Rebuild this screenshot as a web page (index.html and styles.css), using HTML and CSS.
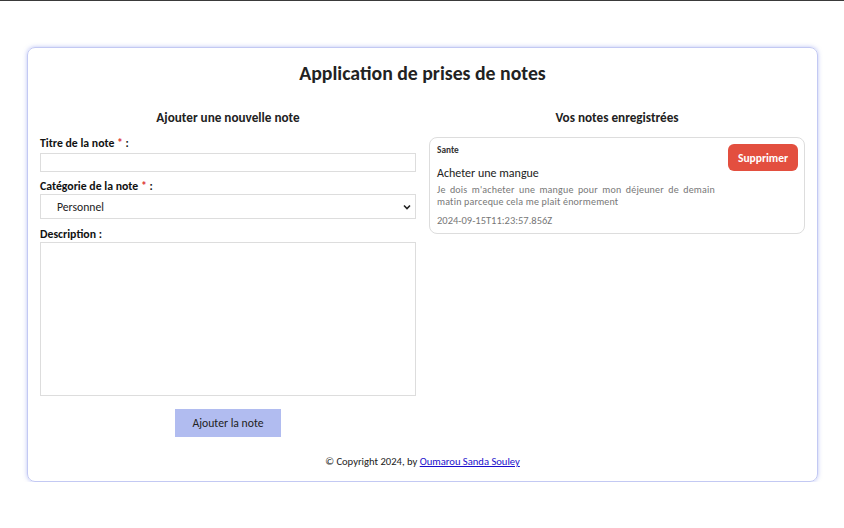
FILE: index.html
```html
<!DOCTYPE html>
<html lang="fr">
<head>
<meta charset="utf-8">
<title>Application de prises de notes</title>
<link rel="stylesheet" href="styles.css">
</head>
<body>
<div class="topline"></div>
<main class="app">
  <h1 class="app-title">Application de prises de notes</h1>
  <div class="columns">
    <section class="col">
      <h2 class="col-title">Ajouter une nouvelle note</h2>
      <form class="form">
        <label class="label" for="titre">Titre de la note <span class="req">*</span> :</label>
        <input class="input" id="titre" type="text">
        <label class="label" for="cat">Catégorie de la note <span class="req">*</span> :</label>
        <select class="select" id="cat">
          <option>Personnel</option>
        </select>
        <label class="label" for="desc">Description :</label>
        <textarea class="textarea" id="desc"></textarea>
        <div class="actions"><button type="button" class="btn-add">Ajouter la note</button></div>
      </form>
    </section>
    <section class="col">
      <h2 class="col-title">Vos notes enregistrées</h2>
      <article class="note">
        <div class="note-body">
          <div class="note-cat">Sante</div>
          <div class="note-title">Acheter une mangue</div>
          <p class="note-desc">Je dois m'acheter une mangue pour mon déjeuner de demain matin parceque cela me plait énormement</p>
          <div class="note-date">2024-09-15T11:23:57.856Z</div>
        </div>
        <button type="button" class="btn-del">Supprimer</button>
      </article>
    </section>
  </div>
  <footer class="footer">© Copyright 2024, by <a href="#">Oumarou Sanda Souley</a></footer>
</main>
</body>
</html>
```
FILE: styles.css
```css
* { box-sizing: border-box; }
html, body { margin: 0; padding: 0; background: #fff; }
body {
  font-family: "Carlito", "Lato", "Open Sans", sans-serif;
  color: #222;
}
.topline { height: 1px; background: #3a3a3a; }
.app {
  width: 791px;
  margin: 46px 0 0 27px;
  border: 1px solid #c3c9f3;
  border-radius: 8px;
  box-shadow: 0 0 4px rgba(120, 135, 235, 0.5);
  padding: 13px 12px 12px;
}
.app-title {
  margin: 0;
  text-align: center;
  font-size: 19.8px;
  font-weight: 700;
  line-height: 24px;
  color: #222;
}
.columns {
  display: grid;
  grid-template-columns: 1fr 1fr;
  gap: 13px;
  margin-top: 25px;
}
.col-title {
  margin: 0 0 11px;
  text-align: center;
  font-size: 13.2px;
  font-weight: 700;
  line-height: 16px;
  color: #222;
}
.form { display: flex; flex-direction: column; }
.label {
  font-size: 11.8px;
  font-weight: 700;
  line-height: 12px;
  color: #111;
  margin-bottom: 2px;
}
.req { color: #d33; }
.input {
  height: 19px;
  border: 1px solid #ddd;
  margin: 2px 0 8px;
  padding: 0 4px;
  font: inherit;
}
.select {
  -webkit-appearance: none;
  appearance: none;
  height: 25px;
  border: 1px solid #ddd;
  border-radius: 0;
  background: #fff url("data:image/svg+xml,%3Csvg xmlns='http://www.w3.org/2000/svg' width='8' height='6' viewBox='0 0 8 6'%3E%3Cpath d='M1 1.5 4 4.5 7 1.5' fill='none' stroke='%23222' stroke-width='1.6'/%3E%3C/svg%3E") no-repeat right 4px center;
  margin: 0 0 9px;
  padding: 0 16px;
  font-family: inherit;
  font-size: 11.7px;
  color: #222;
}
.textarea {
  height: 154px;
  border: 1px solid #ddd;
  resize: none;
  margin: 0;
  font: inherit;
}
.actions { display: flex; justify-content: center; margin-top: 13px; }
.btn-add {
  width: 106px;
  height: 28px;
  border: none;
  background: #b1bcf0;
  color: #222;
  font-family: inherit;
  font-size: 11.7px;
  padding: 0;
}
.note {
  display: flex;
  align-items: flex-start;
  border: 1px solid #ddd;
  border-radius: 8px;
  padding: 6px 6px 6px 7px;
  gap: 13px;
}
.note-body { flex: 1; }
.note-cat { font-size: 9.3px; font-weight: 700; color: #333; line-height: 10px; margin-top: 1px; }
.note-title { font-size: 12px; color: #222; margin-top: 11px; line-height: 15px; }
.note-desc {
  margin: 3px 0 0;
  font-size: 10px;
  line-height: 12px;
  color: #777;
  text-align: justify;
  letter-spacing: 0.2px;
}
.note-date { font-size: 10.5px; color: #777; margin-top: 7px; line-height: 12px; }
.btn-del {
  width: 70px;
  height: 27px;
  border: none;
  border-radius: 6px;
  background: #e34f3f;
  color: #fff;
  font-family: inherit;
  font-weight: 700;
  font-size: 11.5px;
  padding: 0;
  flex: none;
}
.footer {
  margin-top: 18px;
  text-align: center;
  font-size: 10.6px;
  line-height: 14px;
  color: #222;
}
.footer a { color: #1a0dcc; }
```
